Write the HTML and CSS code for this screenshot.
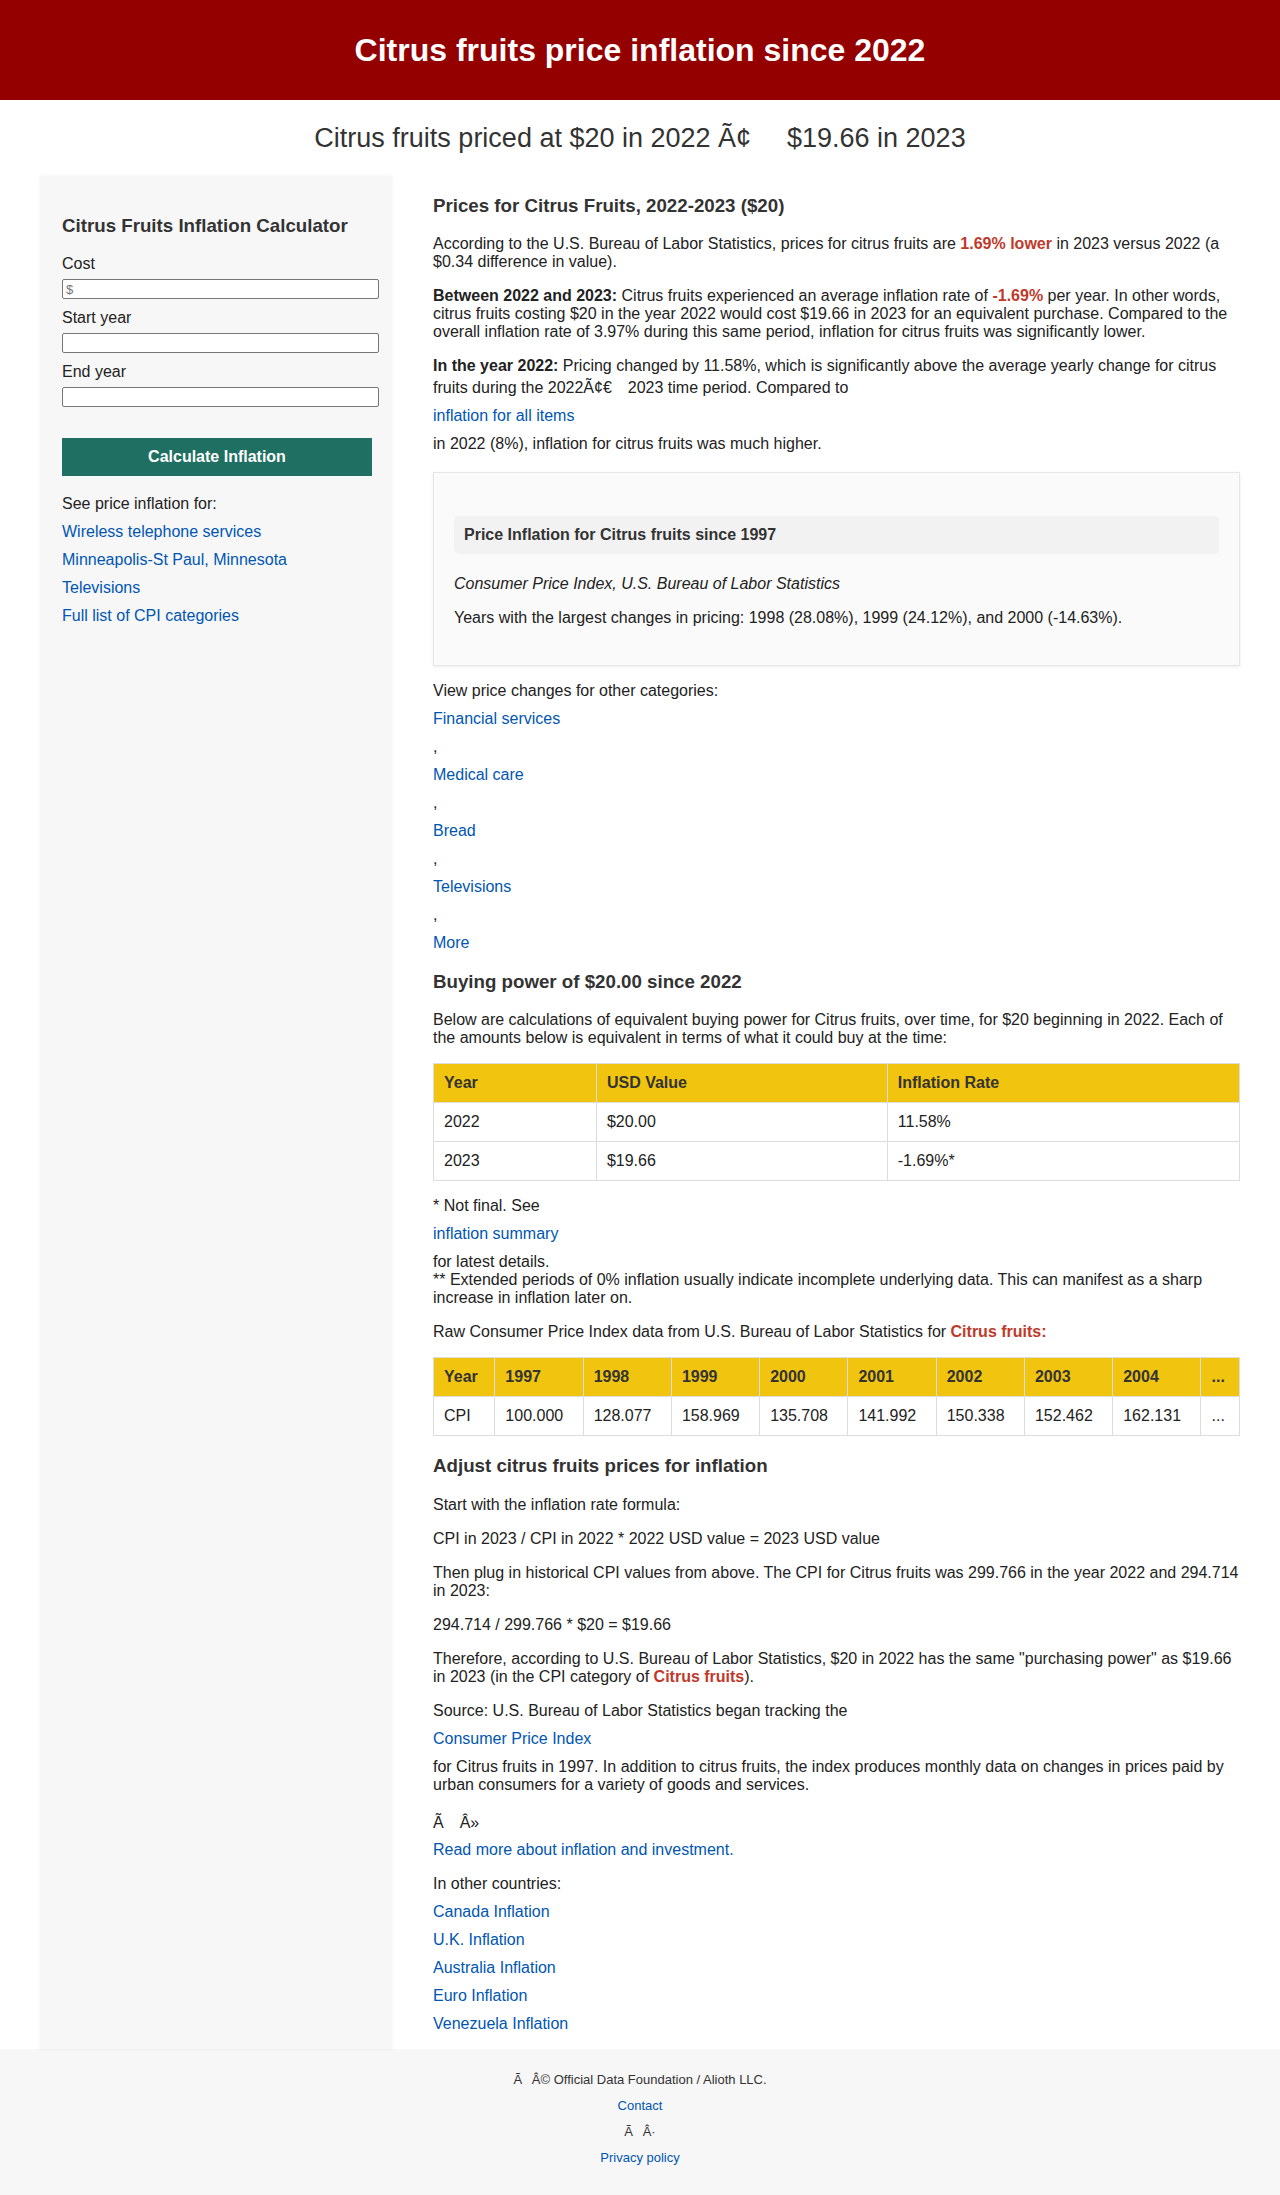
FILE: index.html
```html
<!DOCTYPE html>
<html lang="en">
<head>
<meta charset="utf-8">
<title>Citrus fruits price inflation since 2022</title>
<link rel="stylesheet" href="styles.css">
</head>
<body>
<header class="site-header">
  <h1 class="site-title">Citrus fruits price inflation since 2022</h1>
</header>
<h2 class="subtitle">Citrus fruits priced at $20 in 2022 Ã¢<span class="gap gap-l"></span>$19.66 in 2023</h2>

<div class="layout">
  <aside class="sidebar">
    <h3 class="sidebar-title">Citrus Fruits Inflation Calculator</h3>
    <form class="calc-form">
      <label class="field-label" for="cost">Cost</label>
      <input class="field-input" id="cost" type="text" placeholder="$">
      <label class="field-label" for="start">Start year</label>
      <input class="field-input" id="start" type="text">
      <label class="field-label" for="end">End year</label>
      <input class="field-input" id="end" type="text">
      <button class="calc-button" type="button">Calculate Inflation</button>
    </form>
    <div class="related-title">See price inflation for:</div>
    <ul class="related-list">
      <li><a href="#">Wireless telephone services</a></li>
      <li><a href="#">Minneapolis-St Paul, Minnesota</a></li>
      <li><a href="#">Televisions</a></li>
      <li><a href="#">Full list of CPI categories</a></li>
    </ul>
  </aside>

  <main class="main">
    <h3 class="section-title">Prices for Citrus Fruits, 2022-2023 ($20)</h3>
    <p>According to the U.S. Bureau of Labor Statistics, prices for citrus fruits are <strong class="hl">1.69% lower</strong> in 2023 versus 2022 (a $0.34 difference in value).</p>
    <p><strong>Between 2022 and 2023:</strong> Citrus fruits experienced an average inflation rate of <strong class="hl">-1.69%</strong> per year. In other words, citrus fruits costing $20 in the year 2022 would cost $19.66 in 2023 for an equivalent purchase. Compared to the overall inflation rate of 3.97% during this same period, inflation for citrus fruits was significantly lower.</p>
    <p><strong>In the year 2022:</strong> Pricing changed by 11.58%, which is significantly above the average yearly change for citrus fruits during the 2022Ã¢€<span class="gap gap-m gap-tall"></span>2023 time period. Compared to <a class="blk" href="#">inflation for all items</a> in 2022 (8%), inflation for citrus fruits was much higher.</p>

    <div class="card">
      <div class="card-title">Price Inflation for Citrus fruits since 1997</div>
      <p class="card-source">Consumer Price Index, U.S. Bureau of Labor Statistics</p>
      <p>Years with the largest changes in pricing: 1998 (28.08%), 1999 (24.12%), and 2000 (-14.63%).</p>
    </div>

    <p>View price changes for other categories: <a class="blk" href="#">Financial services</a>, <a class="blk" href="#">Medical care</a>, <a class="blk" href="#">Bread</a>, <a class="blk" href="#">Televisions</a>, <a class="blk" href="#">More</a></p>

    <h3 class="section-title">Buying power of $20.00 since 2022</h3>
    <p>Below are calculations of equivalent buying power for Citrus fruits, over time, for $20 beginning in 2022. Each of the amounts below is equivalent in terms of what it could buy at the time:</p>
    <table class="data-table">
      <thead>
        <tr><th>Year</th><th>USD Value</th><th>Inflation Rate</th></tr>
      </thead>
      <tbody>
        <tr><td>2022</td><td>$20.00</td><td>11.58%</td></tr>
        <tr><td>2023</td><td>$19.66</td><td>-1.69%*</td></tr>
      </tbody>
    </table>
    <p>* Not final. See <a class="blk" href="#">inflation summary</a> for latest details.<br>** Extended periods of 0% inflation usually indicate incomplete underlying data. This can manifest as a sharp increase in inflation later on.</p>
    <p>Raw Consumer Price Index data from U.S. Bureau of Labor Statistics for <strong class="hl">Citrus fruits:</strong></p>
    <table class="data-table">
      <thead>
        <tr><th>Year</th><th>1997</th><th>1998</th><th>1999</th><th>2000</th><th>2001</th><th>2002</th><th>2003</th><th>2004</th><th>...</th></tr>
      </thead>
      <tbody>
        <tr><td>CPI</td><td>100.000</td><td>128.077</td><td>158.969</td><td>135.708</td><td>141.992</td><td>150.338</td><td>152.462</td><td>162.131</td><td>...</td></tr>
      </tbody>
    </table>

    <h3 class="section-title">Adjust citrus fruits prices for inflation</h3>
    <p>Start with the inflation rate formula:</p>
    <p>CPI in 2023 / CPI in 2022 * 2022 USD value = 2023 USD value</p>
    <p>Then plug in historical CPI values from above. The CPI for Citrus fruits was 299.766 in the year 2022 and 294.714 in 2023:</p>
    <p>294.714 / 299.766 * $20 = $19.66</p>
    <p>Therefore, according to U.S. Bureau of Labor Statistics, $20 in 2022 has the same "purchasing power" as $19.66 in 2023 (in the CPI category of <strong class="hl">Citrus fruits</strong>).</p>
    <p>Source: U.S. Bureau of Labor Statistics began tracking the <a class="blk" href="#">Consumer Price Index</a> for Citrus fruits in 1997. In addition to citrus fruits, the index produces monthly data on changes in prices paid by urban consumers for a variety of goods and services.</p>
    <p>Ã<span class="gap gap-m gap-tall"></span>Â» <a class="blk" href="#">Read more about inflation and investment.</a></p>
    <p>In other countries: <a class="blk" href="#">Canada Inflation</a> <a class="blk" href="#">U.K. Inflation</a> <a class="blk" href="#">Australia Inflation</a> <a class="blk" href="#">Euro Inflation</a> <a class="blk" href="#">Venezuela Inflation</a></p>
  </main>
</div>

<footer class="site-footer">
  <p>Ã<span class="gap gap-s"></span>Â© Official Data Foundation / Alioth LLC.</p>
  <a href="#">Contact</a>
  <p>Ã<span class="gap gap-s"></span>Â·</p>
  <a href="#">Privacy policy</a>
</footer>
</body>
</html>
```

FILE: styles.css
```css
html, body {
  margin: 0;
  padding: 0;
}

body {
  font-family: "Liberation Sans", Arial, Helvetica, sans-serif;
  font-size: 16px;
  color: #222;
  background: #fff;
}

a {
  color: #0056b3;
  text-decoration: none;
}

/* Header */
.site-header {
  background: #940000;
  height: 100px;
  display: flex;
  align-items: center;
  justify-content: center;
}

.site-title {
  margin: 0;
  color: #fff;
  font-size: 32px;
  font-weight: bold;
}

.subtitle {
  margin: 0;
  padding: 23px 0 22px;
  text-align: center;
  font-size: 27px;
  font-weight: normal;
  color: #333;
}

.gap {
  display: inline-block;
  width: 1em;
}

.gap-s { width: 0.75em; }
.gap-m { width: 1em; }
.gap-l { width: 1.33em; }
.gap-tall { height: 17.5px; }

/* Layout */
.layout {
  display: grid;
  grid-template-columns: 352px 807px;
  column-gap: 41px;
  padding: 0 40px 0 40px;
}

/* Sidebar */
.sidebar {
  background: #f7f7f7;
  padding: 20px 22px;
  box-shadow: 0 0 4px rgba(0, 0, 0, 0.06);
}

.sidebar-title {
  font-size: 18.72px;
  margin: 18.72px 0;
  color: #333;
}

.calc-form {
  margin: 0;
}

.field-label {
  display: block;
  margin-bottom: 6px;
}

.field-input {
  display: block;
  box-sizing: border-box;
  width: 317px;
  height: 20px;
  margin: 0 0 10px;
  padding: 1px 3px;
  border: 1px solid #767676;
  border-radius: 2px;
  background: #fff;
  font: 13px "Liberation Sans", Arial, sans-serif;
  color: #222;
}

.field-input::placeholder {
  color: #757575;
}

.calc-button {
  display: block;
  width: 310px;
  height: 38px;
  margin: 31px 0 0;
  padding: 0;
  background: #1f6f63;
  color: #fff;
  border: none;
  font: bold 16px "Liberation Sans", Arial, sans-serif;
}

.related-title {
  margin-top: 19px;
}

.related-list {
  list-style: none;
  margin: 0;
  padding: 0;
}

.related-list li {
  margin: 10px 0;
}

/* Main */
.main {
  min-width: 0;
}

.section-title {
  font-size: 18.72px;
  margin: 18.72px 0;
  color: #333;
}

.main p {
  margin: 16px 0;
}

.blk {
  display: block;
  margin: 10px 0;
}

.hl {
  color: #c0392b;
}

.card {
  margin: 19px 0 16px;
  padding: 43px 20px 22px;
  background: #fafafa;
  border: 1px solid #e6e6e6;
  box-shadow: 0 1px 3px rgba(0, 0, 0, 0.08);
}

.card-title {
  margin: 0 0 21px;
  padding: 10px;
  background: #f2f2f2;
  border-radius: 5px;
  font-weight: bold;
  color: #333;
}

.main .card-source {
  font-style: italic;
}

.data-table {
  width: 100%;
  border-collapse: collapse;
}

.data-table th,
.data-table td {
  border: 1px solid #ddd;
  padding: 10px;
  text-align: left;
  font-size: 16px;
}

.data-table th {
  background: #f1c40f;
  color: #333;
}

/* Footer */
.site-footer {
  background: #f7f7f7;
  padding: 23px 0 30px;
  display: flex;
  flex-direction: column;
  align-items: center;
  gap: 11px;
  font-size: 13px;
  color: #333;
  text-align: center;
}

.site-footer p {
  margin: 0;
}
```
